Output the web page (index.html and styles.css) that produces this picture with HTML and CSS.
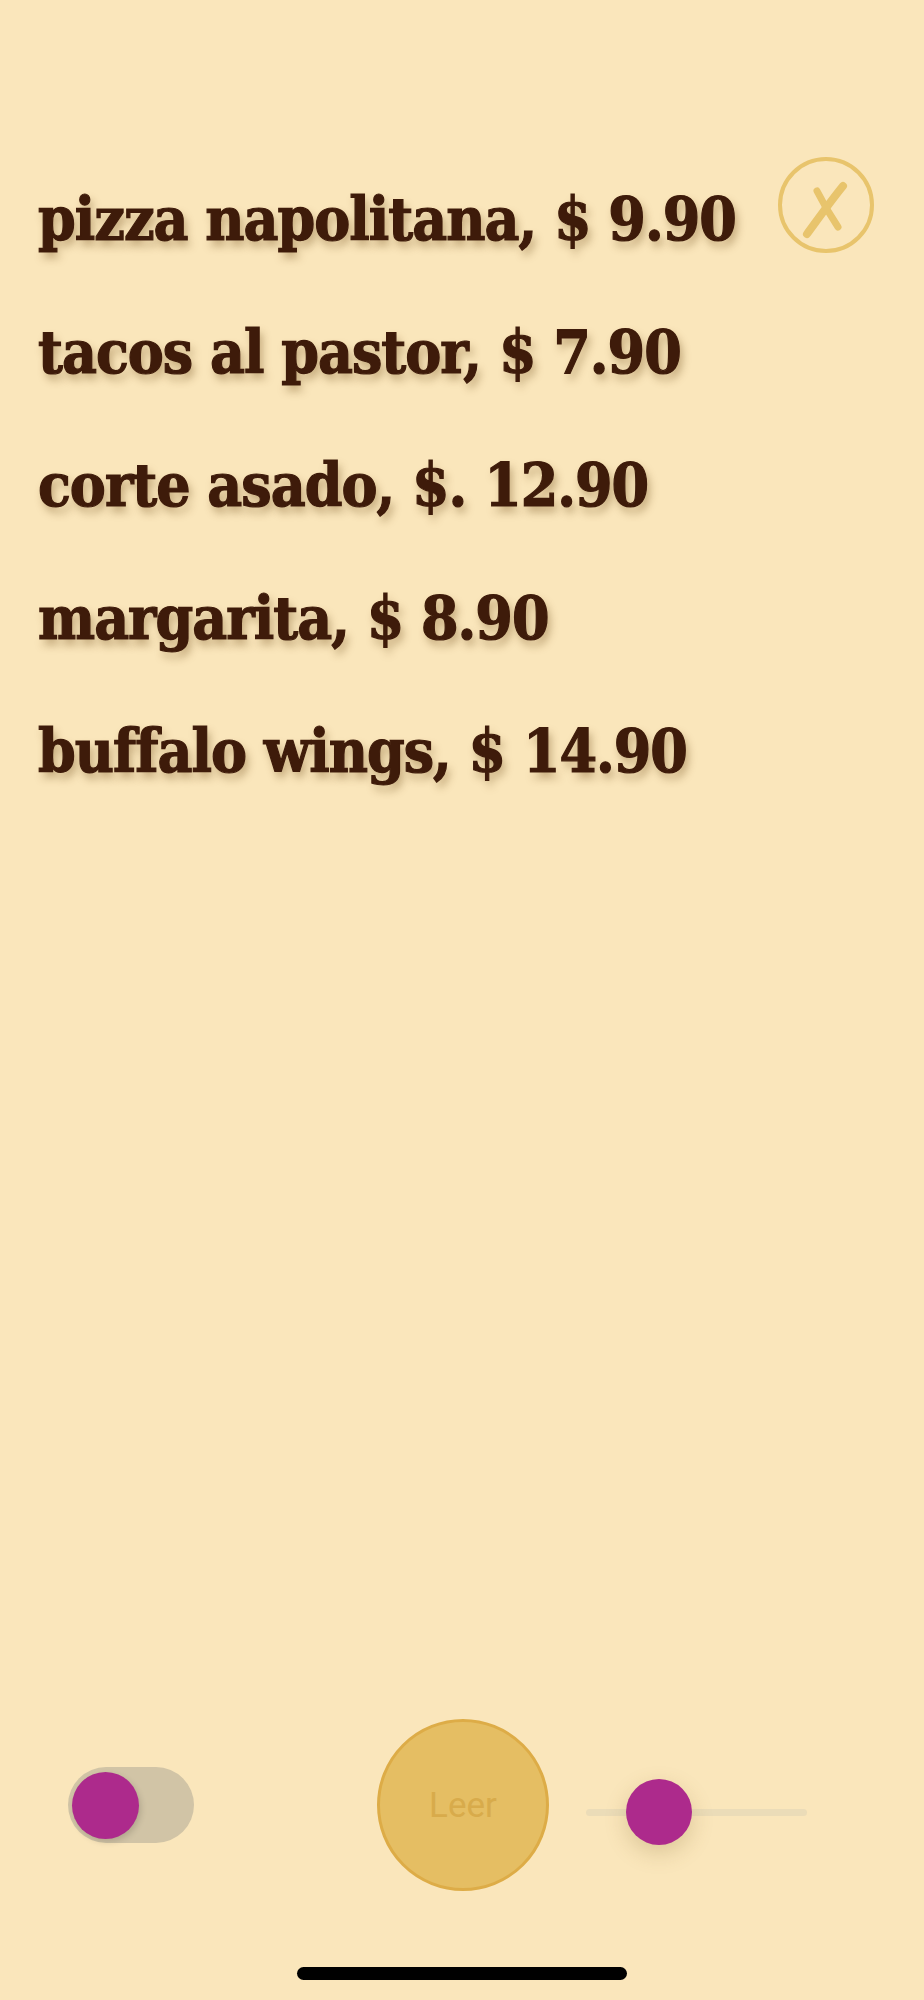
FILE: index.html
```html
<!DOCTYPE html>
<html lang="es">
<head>
    <meta charset="UTF-8">
    <title>Menú</title>
    <link rel="stylesheet" href="styles.css">
</head>
<body>
    <div class="screen">
        <div class="top">
            <ul class="menu">
                <li>pizza napolitana, $ 9.90</li>
                <li>tacos al pastor, $ 7.90</li>
                <li>corte asado, $. 12.90</li>
                <li>margarita, $ 8.90</li>
                <li>buffalo wings, $ 14.90</li>
            </ul>
            <button class="close-btn" aria-label="Cerrar">
                <svg width="96" height="96" viewBox="0 0 96 96">
                    <circle cx="48" cy="48" r="46" fill="none" stroke="#e8c46c" stroke-width="4"/>
                    <path d="M29 77 C40 62 52 45 65 29" fill="none" stroke="#e8c46c" stroke-width="8" stroke-linecap="round"/>
                    <path d="M39 34 C45 46 52 58 60 70" fill="none" stroke="#e8c46c" stroke-width="7" stroke-linecap="round"/>
                </svg>
            </button>
        </div>

        <div class="controls">
            <div class="toggle">
                <div class="toggle-thumb"></div>
            </div>
            <button class="read-btn">Leer</button>
            <div class="slider">
                <div class="slider-track"></div>
                <div class="slider-thumb"></div>
            </div>
        </div>

        <div class="home-area">
            <div class="home-bar"></div>
        </div>
    </div>
</body>
</html>
```

FILE: styles.css
```css
html, body {
    margin: 0;
    padding: 0;
    background: #fae6bb;
}
.screen {
    height: 2000px;
    display: flex;
    flex-direction: column;
}
.top {
    flex: 1;
    display: flex;
    justify-content: space-between;
    align-items: flex-start;
    padding: 157px 50px 0 38px;
}
.menu {
    list-style: none;
    margin: 0;
    padding: 0;
    font-family: "DejaVu Serif", serif;
    font-stretch: condensed;
    font-weight: bold;
    font-size: 60px;
    letter-spacing: -1px;
    line-height: 133px;
    color: #3e1b0a;
    -webkit-text-stroke: 1.2px #3e1b0a;
    text-shadow: 3px 6px 8px rgba(110, 75, 25, 0.4);
    white-space: nowrap;
    margin-top: -4px;
}
.close-btn {
    border: none;
    background: none;
    padding: 0;
    width: 96px;
    height: 96px;
    cursor: pointer;
}
.close-btn svg {
    display: block;
}
.controls {
    display: flex;
    align-items: center;
    padding-left: 68px;
    height: 172px;
}
.toggle {
    width: 126px;
    height: 76px;
    border-radius: 38px;
    background: #d1c4a6;
    display: flex;
    align-items: center;
    padding: 0 4px;
    box-sizing: border-box;
}
.toggle-thumb {
    width: 67px;
    height: 67px;
    border-radius: 50%;
    background: #ad2a8c;
    box-shadow: 2px 3px 6px rgba(0, 0, 0, 0.15);
}
.read-btn {
    margin-left: 183px;
    width: 172px;
    height: 172px;
    border-radius: 50%;
    border: 3px solid #ddac47;
    background: #e5be63;
    color: #d8ab4b;
    font-family: Roboto, "Liberation Sans", sans-serif;
    font-size: 35px;
    font-weight: 400;
    padding: 0;
}
.slider {
    margin-left: 37px;
    width: 221px;
    height: 67px;
    margin-top: 14px;
    display: flex;
    align-items: center;
}
.slider-track {
    width: 100%;
    height: 7px;
    border-radius: 4px;
    background: #ebdcb8;
}
.slider-thumb {
    position: absolute;
    width: 66px;
    height: 66px;
    border-radius: 50%;
    background: #ad2a8c;
    margin-left: 40px;
    box-shadow: 0 8px 22px rgba(120, 90, 30, 0.22);
}
.home-area {
    height: 109px;
    display: flex;
    justify-content: center;
    align-items: flex-end;
    padding-bottom: 20px;
    box-sizing: border-box;
}
.home-bar {
    width: 330px;
    height: 13px;
    border-radius: 7px;
    background: #000;
}
```
